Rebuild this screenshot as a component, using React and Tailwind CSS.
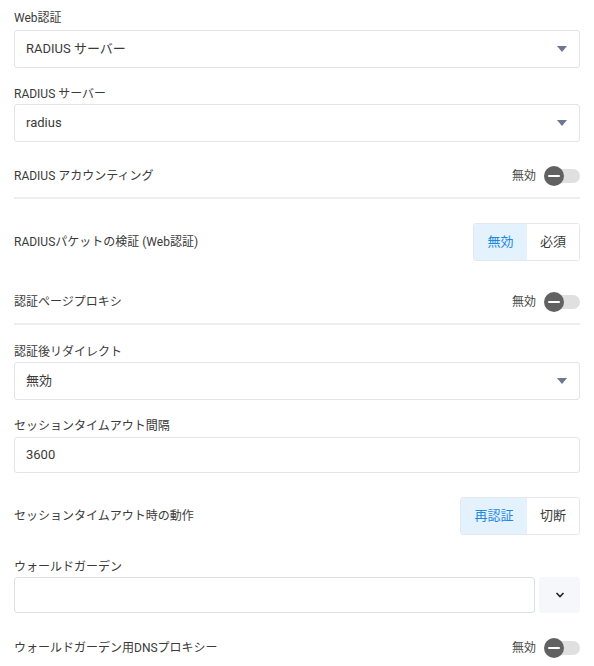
import React from "react";

function Caret() {
  return (
    <svg width="10" height="6" viewBox="0 0 10 6" className="shrink-0">
      <path d="M0 0 L10 0 L5 6 Z" fill="#6b7890" />
    </svg>
  );
}

function Label({ children, className = "" }) {
  return <div className={`text-[12px] leading-[20px] text-[#3a3a3a] ${className}`}>{children}</div>;
}

function Select({ value, className = "" }) {
  return (
    <div
      className={`h-[38px] flex items-center justify-between pl-[11px] pr-[12px] border border-[#e1e4e8] rounded-[3px] bg-white text-[13px] text-[#3a3a3a] ${className}`}
    >
      <span>{value}</span>
      <Caret />
    </div>
  );
}

function Toggle() {
  return (
    <div className="flex items-center gap-[8px]">
      <span className="text-[12px] text-[#444]">無効</span>
      <div className="relative w-[36px] h-[20px] flex items-center">
        <div className="absolute left-[8px] right-0 h-[14px] rounded-full bg-[#e0e0e0]" />
        <div className="relative w-[20px] h-[20px] rounded-full bg-[#616161] flex items-center justify-center">
          <div className="w-[12px] h-[2px] bg-white rounded" />
        </div>
      </div>
    </div>
  );
}

function Segmented({ options, active, widths }) {
  return (
    <div className="flex h-[38px] border border-[#e4e7eb] rounded-[3px] overflow-hidden text-[13px]">
      {options.map((o, i) => (
        <div
          key={o}
          className={`flex items-center justify-center ${widths[i]} ${
            i === active ? "bg-[#e3f2fd] text-[#1e88e5]" : "bg-white text-[#3a3a3a]"
          }`}
        >
          {o}
        </div>
      ))}
    </div>
  );
}

export default function App() {
  return (
    <div
      className="w-[594px] h-[666px] bg-white px-[14px] pt-[8px] overflow-hidden"
      style={{ fontFamily: "Roboto, 'Noto Sans CJK JP', sans-serif" }}
    >
      <Label className="mb-[2px]">Web認証</Label>
      <Select value="RADIUS サーバー" />

      <Label className="mt-[16px]">RADIUS サーバー</Label>
      <Select value="radius" />

      <div className="mt-[12px] h-[45px] flex items-center justify-between border-b-2 border-[#eeeeee]">
        <span className="text-[12px] text-[#3a3a3a]">RADIUS アカウンティング</span>
        <Toggle />
      </div>

      <div className="mt-[24px] flex items-center justify-between">
        <span className="text-[12px] text-[#3a3a3a]">RADIUSパケットの検証 (Web認証)</span>
        <Segmented options={["無効", "必須"]} active={0} widths={["w-[53px]", "w-[52px]"]} />
      </div>

      <div className="mt-[19px] h-[45px] flex items-center justify-between border-b-2 border-[#eeeeee]">
        <span className="text-[12px] text-[#3a3a3a]">認証ページプロキシ</span>
        <Toggle />
      </div>

      <Label className="mt-[17px]">認証後リダイレクト</Label>
      <Select value="無効" />

      <Label className="mt-[16px] mb-[1px]">セッションタイムアウト間隔</Label>
      <div className="h-[36px] flex items-center pl-[11px] border border-[#e1e4e8] rounded-[3px] text-[13px] text-[#3a3a3a]">
        3600
      </div>

      <div className="mt-[24px] flex items-center justify-between">
        <span className="text-[12px] text-[#3a3a3a]">セッションタイムアウト時の動作</span>
        <Segmented options={["再認証", "切断"]} active={0} widths={["w-[66px]", "w-[52px]"]} />
      </div>

      <Label className="mt-[22px]">ウォールドガーデン</Label>
      <div className="flex gap-[4px]">
        <div className="flex-1 h-[36px] border border-[#dcdfe3] rounded-[3px]" />
        <div className="w-[41px] h-[36px] rounded-[3px] bg-[#f5f7fa] flex items-center justify-center">
          <svg width="10" height="6" viewBox="0 0 10 6">
            <path d="M1.5 1 L5 4.5 L8.5 1" fill="none" stroke="#222" strokeWidth="1.6" />
          </svg>
        </div>
      </div>

      <div className="mt-[13px] h-[44px] flex items-center justify-between">
        <span className="text-[12px] text-[#3a3a3a]">ウォールドガーデン用DNSプロキシー</span>
        <Toggle />
      </div>
    </div>
  );
}
